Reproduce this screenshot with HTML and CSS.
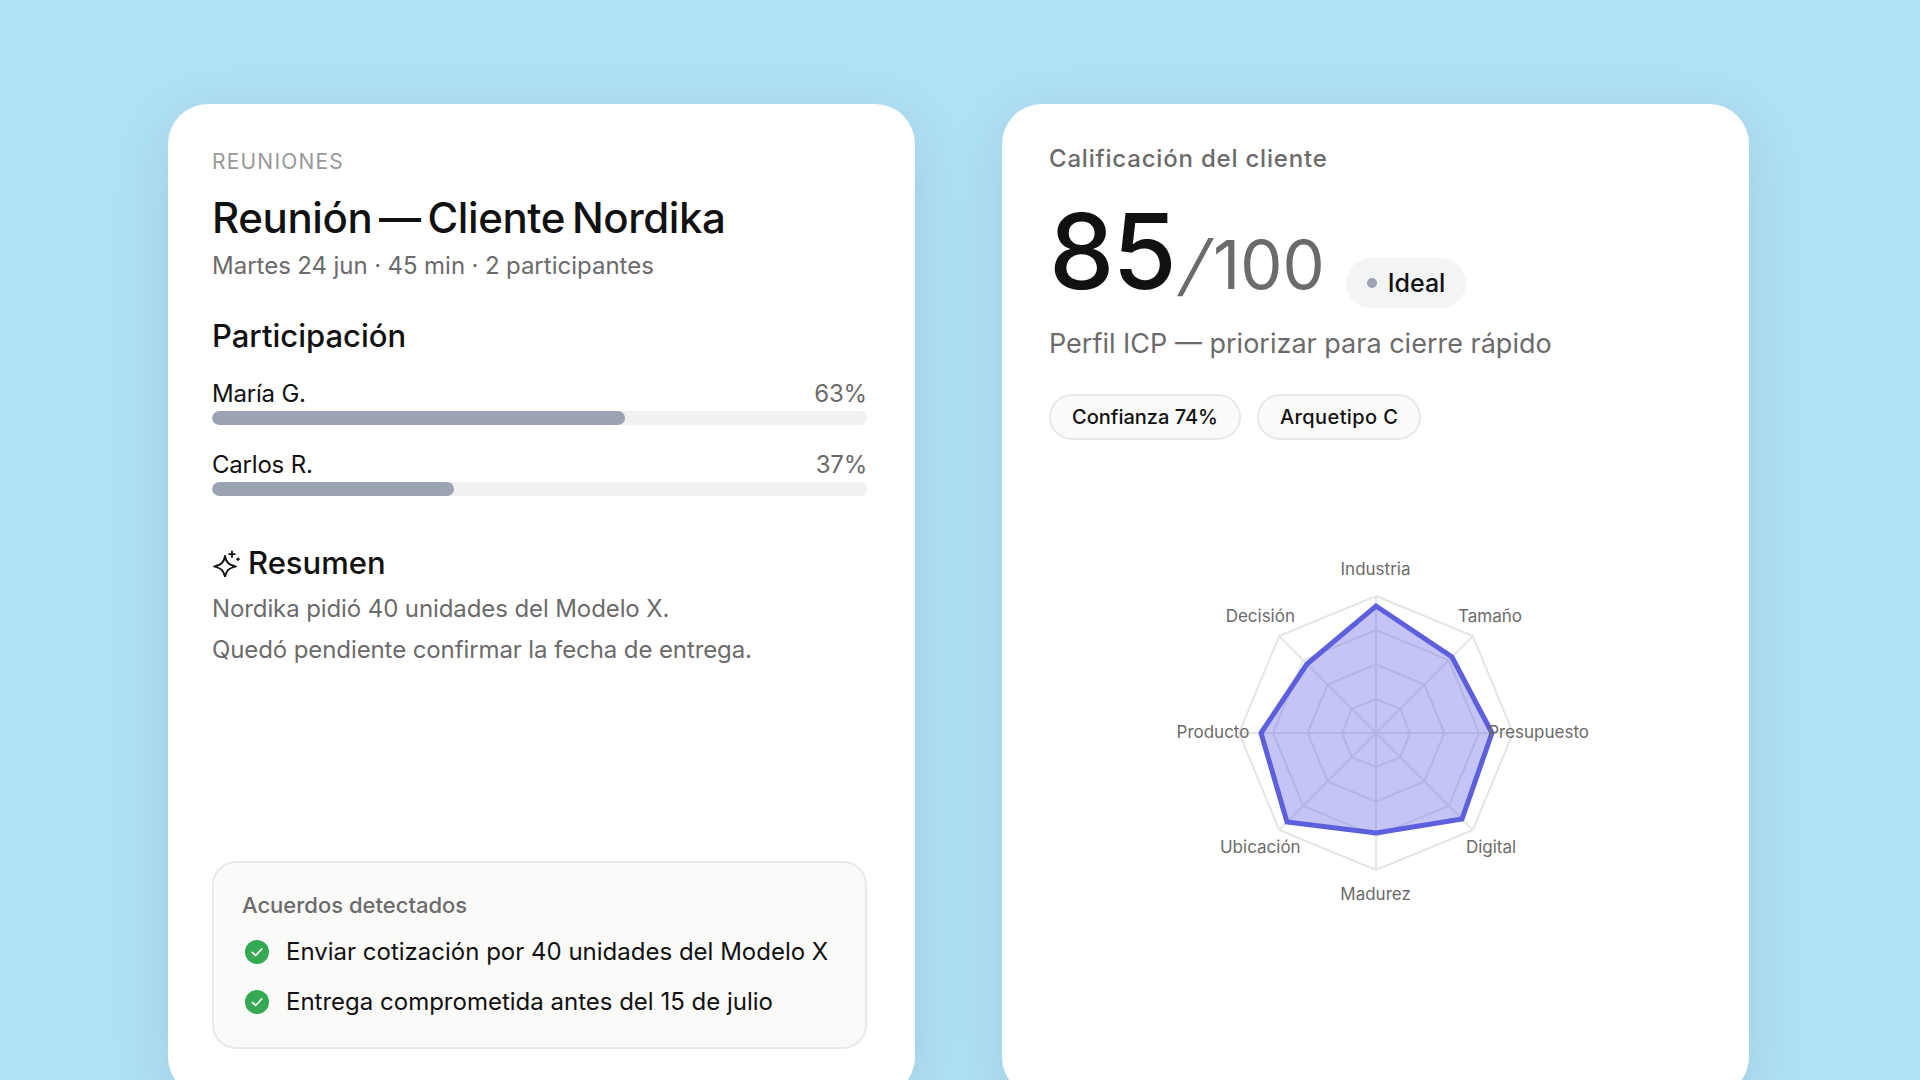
FILE: index.html
```html
<!DOCTYPE html>
<html lang="es">
<head>
    <meta charset="UTF-8">
    <meta name="viewport" content="width=device-width, initial-scale=1.0">
    <title>Reunión — Cliente Nordika</title>
    <link rel="stylesheet" href="styles.css">
</head>
<body>
    <section class="card card-meeting">
        <div class="eyebrow">REUNIONES</div>
        <h1 class="meeting-title">Reunión — Cliente Nordika</h1>
        <p class="meeting-meta">Martes 24 jun · 45 min · 2 participantes</p>

        <h2 class="section-title participation-title">Participación</h2>
        <div class="speaker">
            <div class="speaker-row"><span>María G.</span><span class="speaker-pct">63%</span></div>
            <div class="bar"><div class="bar-fill" style="width: 63%"></div></div>
        </div>
        <div class="speaker">
            <div class="speaker-row"><span>Carlos R.</span><span class="speaker-pct">37%</span></div>
            <div class="bar"><div class="bar-fill" style="width: 37%"></div></div>
        </div>

        <h2 class="section-title summary-title">
            <svg class="sparkle" viewBox="0 0 28 28" fill="none" stroke="#111" stroke-width="1.8" stroke-linejoin="round" stroke-linecap="round">
                <path d="M13 7C14 13 16 15.500 24 17.500C16 19.500 14 22 13 28C12 22 10 19.500 2 17.500C10 15.500 12 13 13 7Z"/>
                <path d="M20 2.500V8M17.200 5.200H22.800"/>
                <path d="M26 9V11.400M24.800 10.200H27.200" stroke-width="1.500"/>
            </svg>
            Resumen
        </h2>
        <p class="summary-line">Nordika pidió 40 unidades del Modelo X.</p>
        <p class="summary-line">Quedó pendiente confirmar la fecha de entrega.</p>

        <div class="agreements">
            <div class="agreements-title">Acuerdos detectados</div>
            <div class="agreement">
                <svg class="check" viewBox="0 0 24 24"><circle cx="12" cy="12" r="12" fill="#34a853"/><path d="M7.500 12.500l3.200 3 6-6.500" fill="none" stroke="#fff" stroke-width="1.800" stroke-linecap="round" stroke-linejoin="round"/></svg>
                <span>Enviar cotización por 40 unidades del Modelo X</span>
            </div>
            <div class="agreement">
                <svg class="check" viewBox="0 0 24 24"><circle cx="12" cy="12" r="12" fill="#34a853"/><path d="M7.500 12.500l3.200 3 6-6.500" fill="none" stroke="#fff" stroke-width="1.800" stroke-linecap="round" stroke-linejoin="round"/></svg>
                <span>Entrega comprometida antes del 15 de julio</span>
            </div>
        </div>
    </section>

    <section class="card card-score">
        <div class="score-label">Calificación del cliente</div>
        <div class="score-row">
            <span class="score-value">85</span>
            <span class="score-total"><span class="score-slash">/</span>100</span>
            <span class="badge"><span class="badge-dot"></span>Ideal</span>
        </div>
        <p class="score-note">Perfil ICP — priorizar para cierre rápido</p>
        <div class="chips">
            <span class="chip">Confianza 74%</span>
            <span class="chip chip-wide">Arquetipo C</span>
        </div>

        <svg class="radar" viewBox="0 0 440 380" width="440" height="380">
            <g class="radar-grid">
                <polygon points="220,53 316.900,93.100 357,190 316.900,286.900 220,327 123.100,286.900 83,190 123.100,93.100"/>
                <polygon points="220,87 292.800,117.200 323,190 292.800,262.800 220,293 147.200,262.800 117,190 147.200,117.200"/>
                <polygon points="220,121.500 268.400,141.600 288.500,190 268.400,238.400 220,258.500 171.600,238.400 151.500,190 171.600,141.600"/>
                <polygon points="220,156 244.200,165.800 254,190 244.200,214.200 220,224 195.800,214.200 186,190 195.800,165.800"/>
                <path d="M220 53V327M83 190H357M123.100 93.100L316.900 286.900M316.900 93.100L123.100 286.900"/>
            </g>
            <polygon class="radar-data" points="220,63 296,114 336,190 306,276 220,290 131,279 105,190 151,121"/>
            <g class="radar-labels">
                <text x="219.500" y="26">Industria</text>
                <text x="334" y="73">Tamaño</text>
                <text x="382.600" y="189">Presupuesto</text>
                <text x="335" y="304">Digital</text>
                <text x="219.600" y="351">Madurez</text>
                <text x="104.300" y="304">Ubicación</text>
                <text x="57" y="189">Producto</text>
                <text x="104.300" y="73">Decisión</text>
            </g>
        </svg>
    </section>
</body>
</html>
```

FILE: styles.css
```css
* {
    margin: 0;
    padding: 0;
    box-sizing: border-box;
    font-family: "Inter", "Liberation Sans", sans-serif;
}
body {
    display: flex;
    gap: 87px;
    height: 1080px;
    padding: 104px 0 0 168px;
    overflow: hidden;
    background: #b0e0f4;
}
.card {
    display: flex;
    flex-direction: column;
    flex: none;
    width: 747px;
    height: 993px;
    background: #fff;
    border-radius: 40px;
    box-shadow: 0 16px 60px rgba(0, 0, 0, 0.09);
}
.card-meeting {
    padding: 47px 48px 48px 44px;
}
.card-score {
    padding: 39px 48px 0 47px;
}

/* left card */
.eyebrow {
    font-size: 21px;
    line-height: 22px;
    letter-spacing: 1.2px;
    color: #999;
}
.meeting-title {
    margin-top: 20px;
    font-size: 42px;
    line-height: 50px;
    font-weight: 500;
    letter-spacing: -0.4px;
    word-spacing: -4px;
    color: #111;
}
.meeting-meta {
    margin-top: 7px;
    font-size: 24px;
    line-height: 32px;
    word-spacing: -0.3px;
    color: #6b6b6b;
}
.section-title {
    font-size: 31px;
    line-height: 38px;
    font-weight: 500;
    color: #111;
}
.participation-title {
    margin-top: 35px;
}
.speaker {
    margin-top: 24px;
}
.speaker + .speaker {
    margin-top: 25px;
}
.speaker-row {
    display: flex;
    justify-content: space-between;
    font-size: 24px;
    line-height: 30px;
    letter-spacing: -0.2px;
    color: #111;
}
.speaker-pct {
    color: #6b6b6b;
}
.bar {
    height: 14px;
    margin-top: 2px;
    background: #f1f1ef;
    border-radius: 7px;
    overflow: hidden;
}
.bar-fill {
    height: 100%;
    background: #9ca3b4;
    border-radius: 7px;
}
.summary-title {
    display: flex;
    align-items: center;
    gap: 8px;
    margin-top: 48px;
}
.sparkle {
    width: 28px;
    height: 28px;
}
.summary-line {
    margin-top: 11px;
    font-size: 24px;
    line-height: 30px;
    letter-spacing: -0.1px;
    color: #6b6b6b;
}
.summary-title + .summary-line {
    margin-top: 12px;
}
.agreements {
    margin-top: auto;
    height: 188px;
    padding: 29px 28px 0;
    background: #fafaf8;
    border: 2px solid #e9e9e7;
    border-radius: 24px;
}
.agreements-title {
    font-size: 22px;
    line-height: 26px;
    font-weight: 500;
    color: #6b6b6b;
}
.agreement {
    display: flex;
    align-items: center;
    gap: 17px;
    margin-top: 20px;
    font-size: 24px;
    line-height: 30px;
    color: #111;
}
.agreements-title + .agreement {
    margin-top: 19px;
}
.check {
    flex: none;
    width: 24px;
    height: 24px;
    margin-left: 3px;
}

/* right card */
.score-label {
    font-size: 24px;
    line-height: 32px;
    font-weight: 500;
    letter-spacing: 0.8px;
    color: #6b6b6b;
}
.score-row {
    display: flex;
    align-items: baseline;
    margin-top: 18px;
    height: 105px;
    color: #111;
}
.score-value {
    font-size: 104px;
    line-height: 116px;
    font-weight: 500;
    letter-spacing: -2px;
}
.score-total {
    margin-left: 4px;
    font-size: 67px;
    line-height: 70px;
    color: #6b6b6b;
}
.score-slash {
    display: inline-block;
    margin: 0 5px 0 5px;
    transform: skewX(-15deg);
}
.badge {
    display: flex;
    align-items: center;
    align-self: flex-start;
    gap: 11px;
    height: 50px;
    margin: 65px 0 0 21px;
    padding: 0 21px;
    font-size: 25px;
    font-weight: 500;
    color: #111;
    background: #f3f4f6;
    border-radius: 25px;
}
.badge-dot {
    width: 10px;
    height: 10px;
    background: #9ca3b4;
    border-radius: 50%;
}
.score-note {
    margin-top: 28px;
    font-size: 27px;
    line-height: 36px;
    color: #6b6b6b;
}
.chips {
    display: flex;
    gap: 16px;
    margin-top: 32px;
}
.chip {
    display: flex;
    align-items: center;
    height: 46px;
    padding: 0 21px;
    font-size: 20px;
    font-weight: 500;
    color: #111;
    background: #fafaf8;
    border: 2px solid #e9e9e7;
    border-radius: 23px;
}
.chip-wide {
    letter-spacing: 0.4px;
}
.radar {
    display: block;
    margin: 103px 0 0 107px;
    overflow: visible;
}
.radar-grid polygon,
.radar-grid path {
    fill: none;
    stroke: #e5e5e5;
    stroke-width: 2;
}
.radar-data {
    fill: rgba(99, 102, 226, 0.38);
    stroke: #5c60dc;
    stroke-width: 5;
    stroke-linejoin: miter;
}
.radar-labels text {
    font-size: 17px;
    fill: #6b6b6b;
    text-anchor: middle;
    dominant-baseline: central;
}
```
